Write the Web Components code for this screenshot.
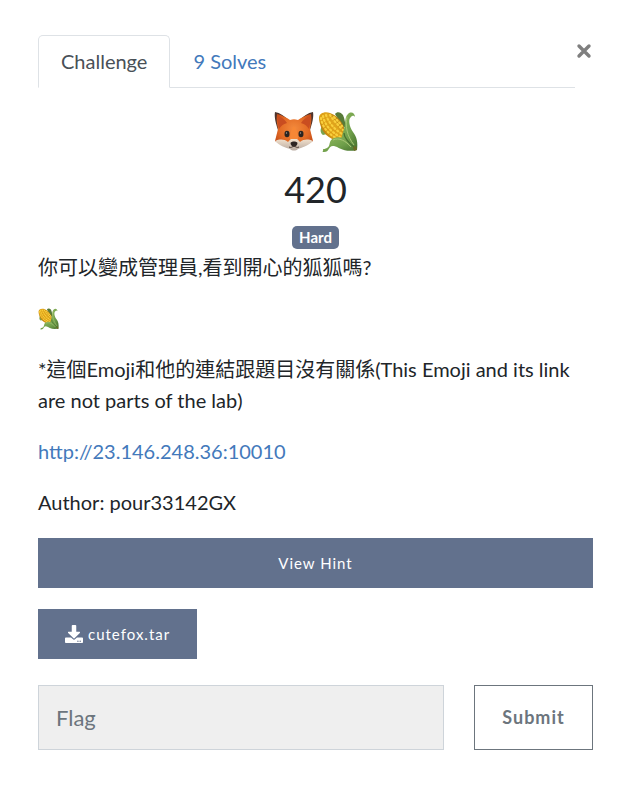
<!DOCTYPE html>
<html lang="zh-Hant">
<head>
<meta charset="utf-8">
<meta name="viewport" content="width=device-width, initial-scale=1">
<title>Challenge</title>
<style>
  body { margin: 0; background: #fff; color: #212529; font: 20px/31px Lato, "Noto Sans CJK TC", sans-serif; }
</style>
</head>
<body>
<challenge-dialog>
  <challenge-tabs slot="header"></challenge-tabs>
  <challenge-title score="420" level="Hard"></challenge-title>
  <challenge-text></challenge-text>
  <action-button wide>View Hint</action-button>
  <action-button><download-icon slot="icon"></download-icon>cutefox.tar</action-button>
  <flag-form></flag-form>
</challenge-dialog>

<template id="corn">
  <style>:host { display: inline-block; width: 40px; height: 40px; } svg { display: block; width: 100%; height: 100%; overflow: visible; }</style>
  <svg viewBox="0 0 40 40" role="img" aria-label="corn">
    <defs>
      <linearGradient id="k" x1="0" y1=".7" x2=".8" y2=".1"><stop offset="0" stop-color="#a86a0a"/><stop offset=".35" stop-color="#dd9f16"/><stop offset=".65" stop-color="#e0a51c"/><stop offset="1" stop-color="#a0690c"/></linearGradient>
      <linearGradient id="l" x1="0" y1="0" x2="1" y2="1"><stop offset="0" stop-color="#8fb75c"/><stop offset=".55" stop-color="#6f9f4a"/><stop offset="1" stop-color="#446e2c"/></linearGradient>
    </defs>
    <path d="M17 3c2-3 6-2 8 1 2 4 2 9 3 13l-4-2z" fill="#587a38"/>
    <path d="M4 15c-2 3-2 7 1 9l4-1-3-8z" fill="#7ba34f"/>
    <path d="M1 7C1 2 7 0 12 2c8 3 13 9 15 18 1 5 0 9-3 10C14 30 6 24 3 16 2 13 1 10 1 7z" fill="url(#k)"/>
    <g fill="none" stroke="#f9cf3c" stroke-width="2.200" stroke-linecap="round" stroke-dasharray="1.200 2.700">
      <path d="M3 7c1 8 6 15 15 20"/>
      <path d="M5 5c2 9 7 15 17 21"/>
      <path d="M8 4c3 8 8 14 16 19"/>
      <path d="M12 4c3 5 8 10 13 15"/>
      <path d="M16 6c3 3 5 5 8 9"/>
    </g>
    <path d="M37 6c0-4-4-6-7-3-4 4-2 10-4 15-1 4-3 8-2 12l5 7 10 2c1-7 0-13-4-18-4-6-5-13-2-15 2-2 3-1 4 0z" fill="url(#l)"/>
    <path d="M39 39C36 31 25 24 16 27c-6 2-3 8-7 10-2 1-3 1-4 1 1 2-2 3 1 3 6 0 4-7 10-6 5 1 10 7 23 4z" fill="url(#l)"/>
    <path d="M29 6c-2 9 0 19 7 28M15 29c6-3 13 1 18 7" fill="none" stroke="#abc777" stroke-width="1"/>
    <path d="M26 22c0 5 4 9 10 14" fill="none" stroke="#47702f" stroke-width="1.300"/>
    <path d="M35 36l3-1 1 4-3 1z" fill="#6c6a22"/>
  </svg>
</template>

<template id="fox">
  <style>:host { display: inline-block; width: 40px; height: 40px; } svg { display: block; width: 100%; height: 100%; }</style>
  <svg viewBox="0 0 40 40" role="img" aria-label="fox">
    <defs>
      <radialGradient id="f" cx=".5" cy=".42" r=".6"><stop offset="0" stop-color="#f38a3c"/><stop offset=".65" stop-color="#e26a24"/><stop offset="1" stop-color="#c34a17"/></radialGradient>
      <linearGradient id="w" x1="0" y1="0" x2="0" y2="1"><stop offset="0" stop-color="#f7e5d0"/><stop offset="1" stop-color="#b9aba1"/></linearGradient>
    </defs>
    <path d="M1 1c5 1 10 4 13 8-4 2-8 5-10 10C2 13 0 6 1 1zM39 1c-5 1-10 4-13 8 4 2 8 5 10 10 2-6 4-13 3-18z" fill="#4e342c"/>
    <path d="M3 3c5 1 10 4 13 6 3-1 5-1 8 0 3-2 8-5 13-6 1 5 0 10-1 15l3 12c-6 4-13 7-19 8C14 37 7 34 1 30l3-12C3 13 2 8 3 3z" fill="url(#f)"/>
    <path d="M4 5c4 1 7 4 9 7-4 1-6 3-8 6-1-4-2-9-1-13zM36 5c-4 1-7 4-9 7 4 1 6 3 8 6 1-4 2-9 1-13z" fill="#c94d20"/>
    <path d="M1 30c5-2 9-2 13 1 2-2 3-4 6-4s4 2 6 4c4-3 8-3 13-1-5 5-12 7-15 8-2 2-6 2-8 0-4-1-10-3-15-8z" fill="url(#w)"/>
    <path d="M16 28c0-6 1-9 4-13 3 4 4 7 4 13z" fill="#f78735"/>
    <ellipse cx="13" cy="23" rx="2.500" ry="3.200" fill="#292421"/>
    <ellipse cx="27" cy="23" rx="2.500" ry="3.200" fill="#292421"/>
    <circle cx="12.500" cy="22" r=".7" fill="#a8a29d"/><circle cx="26.500" cy="22" r=".7" fill="#a8a29d"/>
    <path d="M16.500 32c1-2 6-2 7 0 0 2-2 4-3.500 4s-3.500-2-3.500-4z" fill="#2c2422"/>
    <path d="M15 36c2 1 3 0 5-1 2 1 3 2 5 1" fill="none" stroke="#4b3b34"/>
  </svg>
</template>

<script>
  const define = (name, html, init) => customElements.define(name, class extends HTMLElement {
    constructor() {
      super();
      this.attachShadow({ mode: 'open' }).innerHTML = html;
    }
    connectedCallback() { if (init) init(this, this.shadowRoot); }
  });

  define('corn-emoji', document.getElementById('corn').innerHTML);
  define('fox-emoji', document.getElementById('fox').innerHTML);

  define('download-icon', `
    <style>:host { display: block; width: 18px; height: 18px; } svg { display: block; }</style>
    <svg viewBox="0 0 512 512" width="18" height="18" fill="currentColor" aria-hidden="true"><path d="M216 0h80c13 0 24 11 24 24v168h88c18 0 27 21 14 34L270 378c-7 7-20 7-27 0L90 226c-13-13-4-34 14-34h88V24c0-13 11-24 24-24zm296 376v112c0 13-11 24-24 24H24c-13 0-24-11-24-24V376c0-13 11-24 24-24h147l49 49c20 20 52 20 72 0l49-49h147c13 0 24 11 24 24zM388 464a20 20 0 1 0-40 0 20 20 0 0 0 40 0zm64 0a20 20 0 1 0-40 0 20 20 0 0 0 40 0z"/></svg>`);

  define('challenge-dialog', `
    <style>
      :host { display: block; padding: 35px 37px 50px 38px; }
      header { display: grid; grid-template-columns: 1fr 18px; margin-bottom: 20px; }
      .close { align-self: start; margin-top: 8px; height: 16px; padding: 0 1px; border: 0; background: none; color: #7f7f7f; cursor: pointer; }
      svg { display: block; }
      main { display: flex; flex-direction: column; align-items: flex-start; }
    </style>
    <header>
      <slot name="header"></slot>
      <button class="close" type="button" aria-label="Close"><svg width="16" height="16" viewBox="0 0 16 16"><path d="M3 3l10 10M13 3L3 13" stroke="currentColor" stroke-width="3.400" stroke-linecap="round"/></svg></button>
    </header>
    <main><slot></slot></main>`);

  define('challenge-tabs', `
    <style>
      :host { display: block; border-bottom: 1px solid #dee2e6; }
      nav { display: flex; margin-bottom: -1px; }
      button, a { font: inherit; padding: 10px 22px; border: 1px solid transparent; border-radius: 5px 5px 0 0; }
      button { color: #495057; background: #fff; border-color: #dee2e6 #dee2e6 #fff; }
      a { color: #4379bb; text-decoration: none; }
    </style>
    <nav><button type="button">Challenge</button><a href="#solves">9 Solves</a></nav>`);

  define('challenge-title', `
    <style>
      :host { display: flex; flex-direction: column; align-items: center; align-self: stretch; }
      .emoji { display: flex; gap: 4px; margin: 0; padding: 3px 0; }
      h2 { margin: 12px 0 14px; font-size: 36px; line-height: 46px; font-weight: 400; }
      .badge { padding: 0 7px; border-radius: 5px; background: #62718d; color: #fff; font-size: 15px; line-height: 23px; font-weight: 700; margin-bottom: 3px; }
    </style>
    <h1 class="emoji"><fox-emoji></fox-emoji><corn-emoji></corn-emoji></h1>
    <h2></h2><span class="badge"></span>`,
    (el, root) => {
      root.querySelector('h2').textContent = el.getAttribute('score');
      root.querySelector('.badge').textContent = el.getAttribute('level');
    });

  define('challenge-text', `
    <style>
      :host { display: block; }
      p { margin: 0 0 20px; }
      a { color: #4379bb; text-decoration: none; }
      .link { display: flex; align-items: center; height: 31px; }
      corn-emoji { width: 21px; height: 21px; }
    </style>
    <p>你可以變成管理員,看到開心的狐狐嗎?</p>
    <p><a class="link" href="#corn" aria-label="corn"><corn-emoji></corn-emoji></a></p>
    <p>*這個Emoji和他的連結跟題目沒有關係(This Emoji and its link are not parts of the lab)</p>
    <p><a href="http://23.146.248.36:10010">http://23.146.248.36:10010</a></p>
    <p>Author: pour33142GX</p>`);

  define('action-button', `
    <style>
      :host { display: block; margin-bottom: 21px; }
      :host([wide]) { align-self: stretch; }
      button { display: flex; align-items: center; justify-content: center; gap: 5px; width: 100%; padding: 13px 27px; border: 0; background: #62718d; color: #fff; font: inherit; font-size: 15px; line-height: 24px; letter-spacing: 1px; cursor: pointer; }
    </style>
    <button type="button"><slot name="icon"></slot><span><slot></slot></span></button>`);

  define('flag-form', `
    <style>
      :host { display: block; align-self: stretch; margin-top: 5px; }
      form { display: grid; grid-template-columns: 406fr 119fr; gap: 30px; }
      input, button { box-sizing: border-box; min-width: 0; width: 100%; height: 65px; padding: 16px 17px; border-radius: 0; font: inherit; line-height: 31px; }
      input { border: 1px solid #ced4da; background: #efefef; font-size: 22px; }
      input::placeholder { color: #6c757d; opacity: 1; }
      button { border: 1px solid #6c757d; background: #fff; color: #6c757d; font-size: 18px; font-weight: 700; letter-spacing: 1px; }
    </style>
    <form><input aria-label="Flag" placeholder="Flag"><button type="button">Submit</button></form>`);
</script>
</body>
</html>
